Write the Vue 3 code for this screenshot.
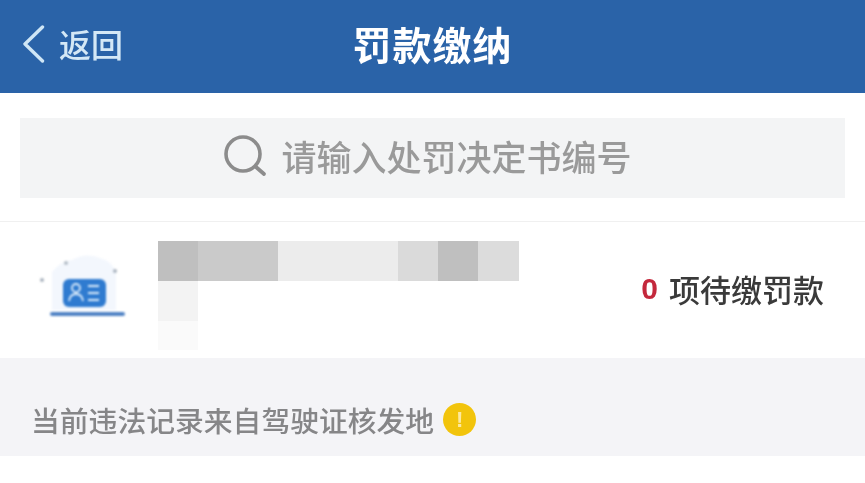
<script setup>
const firstRow = [
  { w: 40, c: '#bfbfbf' },
  { w: 80, c: '#cacaca' },
  { w: 120, c: '#ececec' },
  { w: 40, c: '#dadada' },
  { w: 40, c: '#bfbfbf' },
  { w: 41, c: '#dcdcdc' }
]
</script>

<template>
  <div class="page">
    <header class="bar">
      <div class="back">
        <svg class="chev" width="26" height="40" viewBox="0 0 26 40">
          <path d="M21.5 3 L4 20 L21.5 37" fill="none" stroke="#cfe6f6" stroke-width="3.4" stroke-linecap="round" stroke-linejoin="round" />
        </svg>
        <span>返回</span>
      </div>
      <h1>罚款缴纳</h1>
    </header>

    <div class="search-wrap">
      <div class="search">
        <svg width="44" height="44" viewBox="0 0 44 44">
          <circle cx="20" cy="20" r="17" fill="none" stroke="#8c8c8c" stroke-width="3.6" />
          <path d="M33 33 L41 40" fill="none" stroke="#8c8c8c" stroke-width="3.8" stroke-linecap="round" />
        </svg>
        <span>请输入处罚决定书编号</span>
      </div>
    </div>

    <section class="person">
      <div class="logo">
        <svg width="90" height="70" viewBox="0 0 90 70">
          <path d="M14 60 L14 22 Q24 10 34 10 Q48 2 62 8 Q76 12 78 24 L78 60 Z" fill="#f3f7fd" />
          <circle cx="4" cy="30" r="2" fill="#a9b3bf" />
          <circle cx="28" cy="13" r="2" fill="#b3bcc6" />
          <circle cx="77" cy="21" r="2" fill="#a9b3bf" />
          <rect x="25" y="29" width="43" height="28" rx="6" fill="#2f7bd0" />
          <circle cx="38" cy="38" r="4" fill="none" stroke="#dcecfb" stroke-width="1.8" />
          <path d="M31 51 Q32 44 38 44 Q44 44 45 51" fill="none" stroke="#dcecfb" stroke-width="1.8" />
          <path d="M50 36 H61 M50 43 H61 M50 50 H61" stroke="#dcecfb" stroke-width="1.8" />
          <rect x="12" y="62" width="75" height="4" rx="2" fill="#4f82c4" />
        </svg>
      </div>
      <div class="mosaic">
        <div class="tiles">
          <i v-for="t in firstRow" :key="t.w + t.c" :style="{ width: t.w + 'px', background: t.c }"></i>
        </div>
        <div class="tile-low"></div>
        <div class="tile-faint"></div>
      </div>
      <div class="count"><b>0</b><span>项待缴罚款</span></div>
    </section>

    <section class="note">
      <span>当前违法记录来自驾驶证核发地</span>
      <em>!</em>
    </section>
  </div>
</template>

<style scoped>
.page {
  width: 865px;
  height: 483px;
  overflow: hidden;
  background: #fff;
  font-family: "Noto Sans CJK SC", "Noto Sans", sans-serif;
}
.bar {
  height: 93px;
  background: #2a63a8;
  display: flex;
  align-items: center;
  justify-content: center;
  position: relative;
  padding-bottom: 7px;
  box-sizing: border-box;
}
.bar h1 {
  margin: 0;
  color: #fff;
  font-size: 39px;
  font-weight: 700;
  letter-spacing: 1px;
  filter: blur(0.6px);
}
.back {
  position: absolute;
  left: 21px;
  top: 24px;
  display: flex;
  align-items: center;
  gap: 12px;
  color: #d4e8f6;
  font-size: 32px;
  font-weight: 500;
  line-height: 40px;
  filter: blur(0.5px);
}
.back span {
  margin-top: -2px;
}
.search-wrap {
  padding: 25px 20px 23px;
  border-bottom: 1px solid #f0f0f0;
}
.search {
  height: 80px;
  background: #f3f4f5;
  display: flex;
  align-items: center;
  justify-content: center;
  gap: 14px;
  padding-right: 4px;
  box-sizing: border-box;
  color: #9a9a9a;
  font-size: 35px;
  font-weight: 500;
  filter: blur(0.6px);
}
.search span {
  margin-top: -6px;
}
.search svg {
  margin: -4px 0 0 -6px;
}
.person {
  height: 136px;
  display: flex;
  align-items: flex-start;
  position: relative;
}
.logo {
  margin: 28px 0 0 38px;
  width: 120px;
  height: 70px;
  filter: blur(0.8px);
}
.mosaic {
  margin-top: 19px;
  filter: blur(0.4px);
}
.tiles {
  display: flex;
  height: 40px;
}
.tiles i {
  display: block;
}
.tile-low {
  width: 40px;
  height: 40px;
  background: #f3f3f3;
}
.tile-faint {
  width: 40px;
  height: 29px;
  background: #fafafa;
}
.count {
  position: absolute;
  right: 41px;
  top: 44px;
  display: flex;
  align-items: center;
  gap: 11px;
  font-size: 31px;
  font-weight: 500;
  color: #3a3a3a;
  filter: blur(0.5px);
}
.count b {
  font-family: "Liberation Sans", sans-serif;
  font-weight: 700;
  font-size: 30px;
  color: #c4283c;
}
.note {
  height: 98px;
  background: #f4f4f7;
  display: flex;
  align-items: center;
  padding: 24px 0 0 31px;
  box-sizing: border-box;
  font-size: 28.8px;
  font-weight: 500;
  color: #868688;
}
.note span {
  filter: blur(0.6px);
}
.note em {
  margin-left: 9px;
  width: 33px;
  height: 33px;
  border-radius: 50%;
  background: #f2c40c;
  color: #fde9a0;
  font-style: normal;
  font-weight: 700;
  font-size: 22px;
  line-height: 33px;
  text-align: center;
  font-family: "Liberation Sans", sans-serif;
  filter: blur(0.5px);
}
</style>
